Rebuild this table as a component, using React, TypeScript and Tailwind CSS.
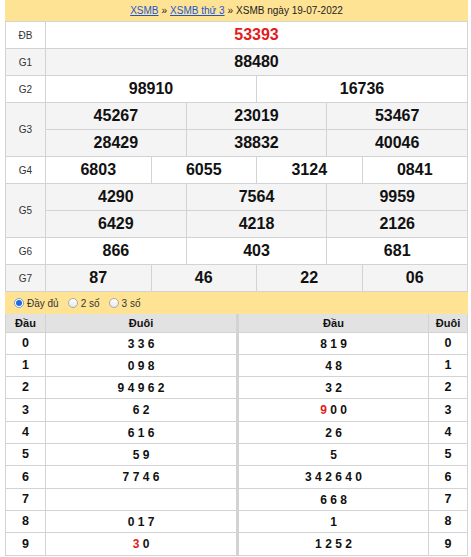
import React from 'react';

type Prize = {
  label: string;
  lines: string[][];
  gray?: boolean;
  red?: boolean;
};

const prizes: Prize[] = [
  { label: 'ĐB', lines: [['53393']], red: true },
  { label: 'G1', lines: [['88480']], gray: true },
  { label: 'G2', lines: [['98910', '16736']] },
  { label: 'G3', lines: [['45267', '23019', '53467'], ['28429', '38832', '40046']], gray: true },
  { label: 'G4', lines: [['6803', '6055', '3124', '0841']] },
  { label: 'G5', lines: [['4290', '7564', '9959'], ['6429', '4218', '2126']], gray: true },
  { label: 'G6', lines: [['866', '403', '681']] },
  { label: 'G7', lines: [['87', '46', '22', '06']], gray: true },
];

// tail digits, red marks the digit drawn with the special prize
const loto: { head: string; tail: string; tailRed?: number; left: string; leftRed?: number }[] = [
  { head: '0', tail: '3 3 6', left: '8 1 9' },
  { head: '1', tail: '0 9 8', left: '4 8' },
  { head: '2', tail: '9 4 9 6 2', left: '3 2' },
  { head: '3', tail: '6 2', left: '9 0 0', leftRed: 0 },
  { head: '4', tail: '6 1 6', left: '2 6' },
  { head: '5', tail: '5 9', left: '5' },
  { head: '6', tail: '7 7 4 6', left: '3 4 2 6 4 0' },
  { head: '7', tail: '', left: '6 6 8' },
  { head: '8', tail: '0 1 7', left: '1' },
  { head: '9', tail: '3 0', tailRed: 0, left: '1 2 5 2' },
];

const rowHeights = ['h-[22px]', 'h-[22px]', 'h-[22px]', 'h-[23px]', 'h-[22px]', 'h-[22px]', 'h-[23px]', 'h-[22px]', 'h-[22px]', 'h-[23px]'];

const Digits = ({ text, red }: { text: string; red?: number }) => {
  const parts = text.split(' ');
  return (
    <span>
      {parts.map((d, i) => (
        <React.Fragment key={i}>
          {i > 0 && ' '}
          <span className={red === i ? 'text-[#e31b1b]' : ''}>{d}</span>
        </React.Fragment>
      ))}
    </span>
  );
};

const Radio = ({ checked, label }: { checked?: boolean; label: string }) => (
  <div className="flex items-center gap-[3px]">
    {checked ? (
      <span className="w-[10px] h-[10px] rounded-full border border-[#7c9fd6] bg-white flex items-center justify-center">
        <span className="w-[6px] h-[6px] rounded-full bg-[#1f6ad8]" />
      </span>
    ) : (
      <span className="w-[10px] h-[10px] rounded-full border border-[#a9a9a9] bg-gradient-to-b from-white to-[#e8e8e8]" />
    )}
    <span>{label}</span>
  </div>
);

export default function App() {
  return (
    <div className="bg-white w-[471px] h-[557px] overflow-hidden font-['Liberation_Sans',Arial,sans-serif]">
      <div className="ml-[5px] w-[463px]">
        <div className="h-[21px] bg-[#ffe394] flex items-center justify-center text-[10px] text-[#222]">
          <a className="text-[#1b57cf] underline">XSMB</a>
          <span className="mx-[3px]">»</span>
          <a className="text-[#1b57cf] underline">XSMB thứ 3</a>
          <span className="mx-[3px]">»</span>
          <span>XSMB ngày 19-07-2022</span>
        </div>

        <div className="border-l border-t border-[#d3d3d3]">
          {prizes.map((p) => (
            <div key={p.label} className={`flex ${p.gray ? 'bg-[#f4f4f4]' : 'bg-white'}`}>
              <div className="w-[40px] border-r border-b border-[#d3d3d3] flex items-center justify-center text-[10px] text-[#333]">
                {p.label}
              </div>
              <div className="flex-1 flex flex-col">
                {p.lines.map((line, li) => (
                  <div key={li} className="flex h-[27px]">
                    {line.map((n, ni) => (
                      <div
                        key={ni}
                        className={`flex-1 border-r border-b border-[#d3d3d3] flex items-center justify-center text-[16px] font-bold ${
                          p.red ? 'text-[#e31b1b]' : 'text-[#111]'
                        }`}
                      >
                        {n}
                      </div>
                    ))}
                  </div>
                ))}
              </div>
            </div>
          ))}
        </div>

        <div className="h-[22px] bg-[#ffe394] flex items-center gap-[9px] pl-[9px] text-[10px] text-[#333]">
          <Radio checked label="Đầy đủ" />
          <Radio label="2 số" />
          <Radio label="3 số" />
        </div>

        <div className="flex border-l border-[#d3d3d3] text-[#111] font-bold">
          <div className="flex flex-col">
            <div className="flex h-[19px] bg-[#e2e2e2] text-[11px]">
              <div className="w-[40px] border-r border-b border-[#d3d3d3] flex items-center justify-center">Đầu</div>
              <div className="w-[193px] border-r-[3px] border-b border-[#d3d3d3] flex items-center justify-center">Đuôi</div>
            </div>
            {loto.map((r, i) => (
              <div key={r.head} className={`flex ${rowHeights[i]} text-[12px]`}>
                <div className="w-[40px] border-r border-b border-[#d3d3d3] flex items-center justify-center text-[12.5px]">{r.head}</div>
                <div className="w-[193px] border-r-[3px] border-b border-[#d3d3d3] flex items-center justify-center">
                  <Digits text={r.tail} red={r.tailRed} />
                </div>
              </div>
            ))}
          </div>
          <div className="flex flex-col">
            <div className="flex h-[19px] bg-[#e2e2e2] text-[11px]">
              <div className="w-[190px] border-r border-b border-[#d3d3d3] flex items-center justify-center">Đầu</div>
              <div className="w-[39px] border-r border-b border-[#d3d3d3] flex items-center justify-center">Đuôi</div>
            </div>
            {loto.map((r, i) => (
              <div key={r.head} className={`flex ${rowHeights[i]} text-[12px]`}>
                <div className="w-[190px] border-r border-b border-[#d3d3d3] flex items-center justify-center">
                  <Digits text={r.left} red={r.leftRed} />
                </div>
                <div className="w-[39px] border-r border-b border-[#d3d3d3] flex items-center justify-center text-[12.5px]">{r.head}</div>
              </div>
            ))}
          </div>
        </div>
      </div>
    </div>
  );
}
